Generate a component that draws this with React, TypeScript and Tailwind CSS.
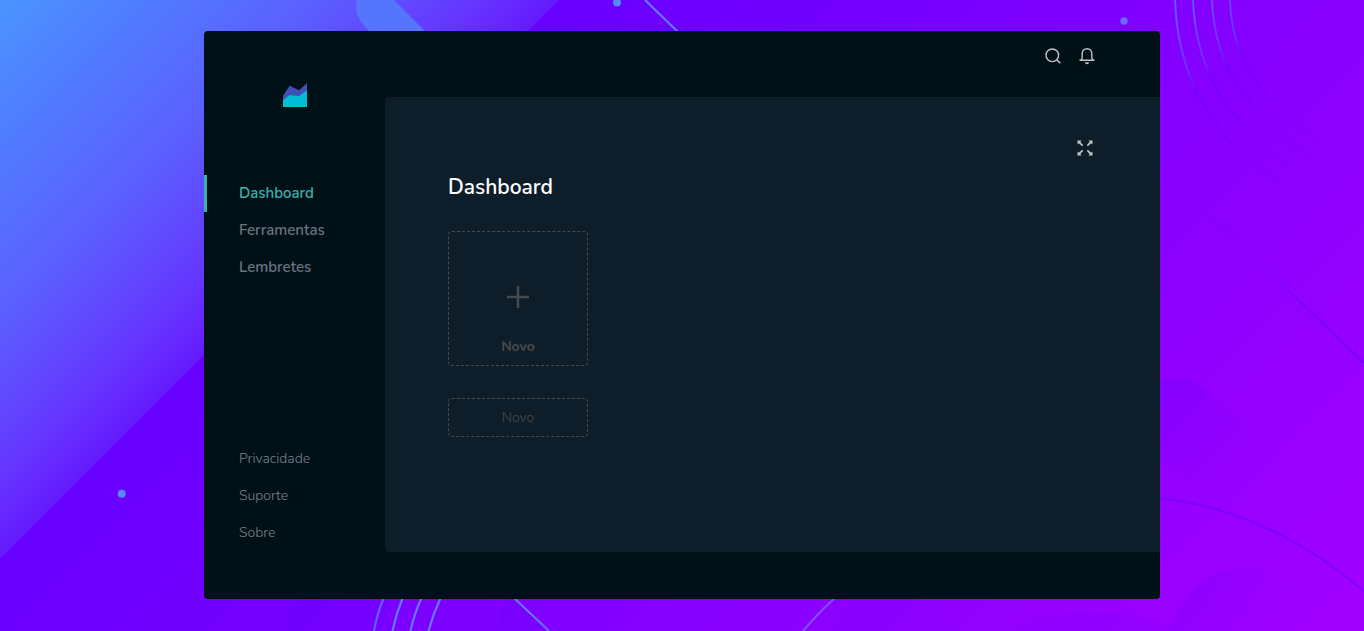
import React from "react";
import { FcAreaChart } from "react-icons/fc";

const mainLinks = ["Dashboard", "Ferramentas", "Lembretes"];
const footerLinks = ["Privacidade", "Suporte", "Sobre"];

function Backdrop() {
  return (
    <svg
      className="absolute inset-0 h-full w-full"
      viewBox="0 0 1364 631"
      preserveAspectRatio="xMidYMid slice"
      aria-hidden="true"
    >
      <defs>
        <linearGradient id="base" gradientUnits="userSpaceOnUse" x1="0" y1="0" x2="998" y2="998">
          <stop offset="0.28" stopColor="#6800ff" />
          <stop offset="0.55" stopColor="#7e00ff" />
          <stop offset="1" stopColor="#a200ff" />
        </linearGradient>
        <linearGradient id="corner" gradientUnits="userSpaceOnUse" x1="0" y1="0" x2="280" y2="280">
          <stop offset="0" stopColor="#4a94ff" />
          <stop offset="0.25" stopColor="#507dff" />
          <stop offset="0.57" stopColor="#5b5fff" />
          <stop offset="0.84" stopColor="#6538ff" />
          <stop offset="1" stopColor="#661aff" />
        </linearGradient>
        <linearGradient id="rings" gradientUnits="userSpaceOnUse" x1="1190" y1="0" x2="1330" y2="180">
          <stop offset="0" stopColor="#6a55ff" />
          <stop offset="0.25" stopColor="#7228ff" />
          <stop offset="0.34" stopColor="#7000ff" stopOpacity="0.75" />
          <stop offset="1" stopColor="#7800ff" stopOpacity="0" />
        </linearGradient>
        <linearGradient id="pill" gradientUnits="userSpaceOnUse" x1="1160" y1="380" x2="1260" y2="480">
          <stop offset="0" stopColor="#7c00ff" stopOpacity="0.6" />
          <stop offset="1" stopColor="#8c00ff" stopOpacity="0" />
        </linearGradient>
        <linearGradient id="disc" gradientUnits="userSpaceOnUse" x1="1180" y1="580" x2="1290" y2="640">
          <stop offset="0" stopColor="#8000ff" stopOpacity="0.5" />
          <stop offset="1" stopColor="#8c00ff" stopOpacity="0" />
        </linearGradient>
        <linearGradient id="ray" gradientUnits="userSpaceOnUse" x1="1200" y1="205" x2="1364" y2="363">
          <stop offset="0" stopColor="#7400ff" stopOpacity="0" />
          <stop offset="1" stopColor="#7000ff" />
        </linearGradient>
      </defs>
      <rect width="1364" height="631" fill="url(#base)" />
      <path d="M0 0H559L0 559Z" fill="url(#corner)" />
      <path d="M357 0C354 12 358 20 368 30L400 60H454L394 0Z" fill="#5575ff" />
      <g fill="#558aff">
        <circle cx="617" cy="2.5" r="4" />
        <circle cx="121.700" cy="493.700" r="4" />
        <circle cx="1124" cy="21" r="3.700" fill="#6a6aff" />
      </g>
      <g fill="none" stroke="#6478ff" strokeWidth="2.200">
        <path d="M645 0L678 32" />
        <path d="M374 631Q377 614 384 597" />
        <path d="M392.500 631Q396 614 403 597" />
        <path d="M410.500 631Q414 614 422 597" />
        <path d="M428.500 631Q433 614 441 597" />
        <path d="M513 597L549 631" />
        <path d="M803 631Q818 613 836 597" stroke="#7f50ff" />
      </g>
      <g fill="none" stroke="url(#rings)" strokeWidth="2">
        <path d="M1175 0C1178 90 1225 160 1315 202" />
        <path d="M1193 0C1196 80 1240 145 1330 190" />
        <path d="M1212 0C1214 70 1255 130 1340 172" />
        <path d="M1230 0C1231 60 1268 115 1350 160" />
      </g>
      <path d="M1200 205L1318 319L1364 363" fill="none" stroke="url(#ray)" strokeWidth="2" />
      <path d="M1160 380Q1190 372 1208 392L1310 492L1260 540L1160 460Z" fill="url(#pill)" />
      <path d="M1160 498C1230 506 1300 537 1364 591" fill="none" stroke="#7d00ff" strokeWidth="2" />
      <circle cx="1246" cy="643" r="75" fill="url(#disc)" />
      <path d="M1010 631Q1080 595 1170 625L1185 631Z" fill="#7c00ff" fillOpacity="0.2" />
      <path d="M287 631Q287 612 296 597H390L380 631Z" fill="#6600ff" fillOpacity="0.2" />
      <path d="M497 631Q499 610 510 597L549 631Z" fill="#6800ff" fillOpacity="0.25" />
      <path d="M835 631Q842 610 862 597H920L960 631Z" fill="#7000ff" fillOpacity="0.12" />
    </svg>
  );
}

function SearchIcon() {
  return (
    <svg className="size-5" viewBox="0 0 20 20" fill="none" stroke="currentColor" strokeWidth="1.4" aria-hidden="true">
      <circle cx="9.300" cy="9.300" r="6.300" />
      <path d="M14 14L17.300 17.300" strokeWidth="1.600" />
    </svg>
  );
}

function BellIcon() {
  return (
    <svg className="size-5" viewBox="0 0 20 20" fill="none" stroke="currentColor" strokeWidth="1.4" aria-hidden="true">
      <path d="M2.500 14.300H17.500" />
      <path d="M4 14.300C4.900 13.400 5.200 12.500 5.200 11V7.500C5.200 4.700 7.200 2.700 10 2.700S14.800 4.700 14.800 7.500V11C14.800 12.500 15.100 13.400 16 14.300" />
      <path d="M8 16.300H12A2 1.900 0 0 1 8 16.300Z" fill="currentColor" stroke="none" />
    </svg>
  );
}

function ExpandIcon() {
  return (
    <svg className="size-4" viewBox="0 0 16 16" fill="currentColor" aria-hidden="true">
      <path d="M0.500 0.500H4.600L3.300 1.900L6.200 5.100L5.100 6.200L1.900 3.300L0.500 4.600Z" />
      <path d="M15.500 0.500H11.400L12.700 1.900L9.800 5.100L10.900 6.200L14.100 3.300L15.500 4.600Z" />
      <path d="M0.500 15.500H4.600L3.300 14.100L6.200 10.900L5.100 9.800L1.900 12.700L0.500 11.400Z" />
      <path d="M15.500 15.500H11.400L12.700 14.100L9.800 10.900L10.900 9.800L14.100 12.700L15.500 11.400Z" />
    </svg>
  );
}

function PlusIcon() {
  return (
    <svg className="size-6" viewBox="0 0 24 24" fill="none" stroke="currentColor" strokeWidth="2.500" aria-hidden="true">
      <path d="M1 12H23M12 1V23" />
    </svg>
  );
}

function Sidebar() {
  return (
    <aside className="flex w-[181px] shrink-0 flex-col justify-between pb-12">
      <div>
        <div className="flex h-36 items-start justify-center pt-12 pl-px">
          <FcAreaChart size={32} aria-label="Logo" />
        </div>
        <nav className="flex flex-col text-[15px] font-semibold">
          {mainLinks.map((label, i) => (
            <a
              key={label}
              href={"#" + label.toLowerCase()}
              aria-current={i === 0 ? "page" : undefined}
              className={
                i === 0
                  ? "flex h-[37px] items-center border-l-3 border-[#38b2ac] pl-8 text-[#38b2ac]"
                  : "flex h-[37px] items-center border-l-3 border-transparent pl-8 text-[#6b7280]"
              }
            >
              {label}
            </a>
          ))}
        </nav>
      </div>
      <nav className="flex flex-col font-light text-[#7b828e]">
        {footerLinks.map((label) => (
          <a key={label} href={"#" + label.toLowerCase()} className="flex h-[37px] items-center pl-[35px]">
            {label}
          </a>
        ))}
      </nav>
    </aside>
  );
}

export default function App() {
  return (
    <div className="relative flex min-h-screen bg-[#7e00ff] px-51 pt-[31px] pb-8 font-['Nunito','Open_Sans',sans-serif] text-sm">
      <Backdrop />
      <div className="relative flex grow overflow-hidden rounded bg-[#001017]">
        <Sidebar />
        <div className="flex grow flex-col pb-[47px]">
          <header className="flex h-[66px] items-start justify-end gap-3.5 pt-[15px] pr-[63px] text-[#c4c4c4]">
            <button type="button" aria-label="Buscar">
              <SearchIcon />
            </button>
            <button type="button" aria-label="Notificações">
              <BellIcon />
            </button>
          </header>
          <main className="flex grow flex-col rounded-l bg-[#0d1d29] pt-[43px] pl-[63px]">
            <div className="flex justify-end pr-[67px] text-[#c4c4c4]">
              <button type="button" aria-label="Expandir">
                <ExpandIcon />
              </button>
            </div>
            <h1 className="mt-[17px] text-[21px] leading-7 font-semibold text-white">Dashboard</h1>
            <div className="mt-[30px] flex flex-col items-start gap-8 text-[#4a4a4a]">
              <button
                type="button"
                className="flex h-[135px] w-[140px] flex-col items-center justify-end gap-7 rounded border border-dashed border-[#4a4a4a] pb-2 font-bold"
              >
                <PlusIcon />
                Novo
              </button>
              <button
                type="button"
                className="h-[39px] w-[140px] rounded border border-dashed border-[#4a4a4a] font-light"
              >
                Novo
              </button>
            </div>
          </main>
        </div>
      </div>
    </div>
  );
}
